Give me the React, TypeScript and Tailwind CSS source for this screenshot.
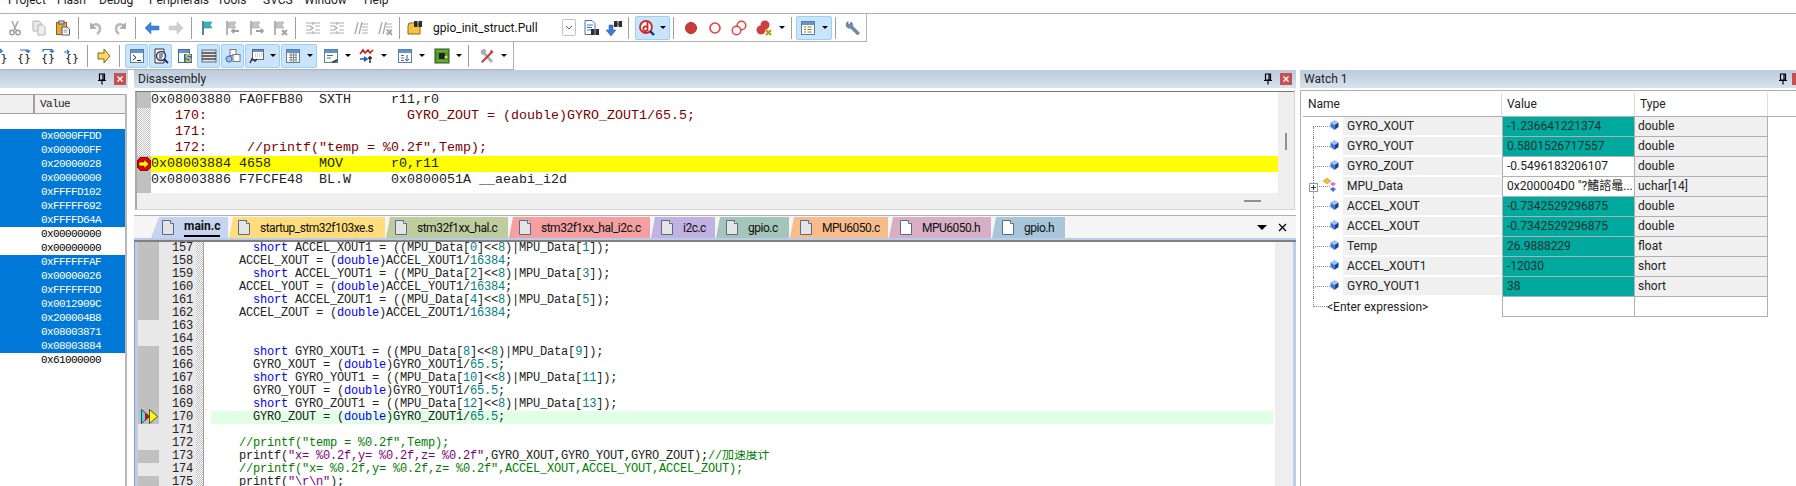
import type { ReactNode } from "react";

const sans = "font-['Roboto','Noto_Sans_CJK_SC',sans-serif]";
const mono = "font-['Liberation_Mono','Noto_Sans_CJK_SC',monospace]";

function Ic({ children }: { children: ReactNode }) {
  return (
    <svg width="16" height="16" viewBox="0 0 16 16" className="shrink-0">
      {children}
    </svg>
  );
}

const Cut = () => (
  <Ic>
    <path d="M5 1l4 9M11 1L7 10" stroke="#a8a8a8" strokeWidth="1.6" fill="none" />
    <circle cx="5" cy="12.5" r="2.2" fill="none" stroke="#9a9a9a" strokeWidth="1.4" />
    <circle cx="11" cy="12.5" r="2.2" fill="none" stroke="#9a9a9a" strokeWidth="1.4" />
  </Ic>
);
const Copy = () => (
  <Ic>
    <path d="M2 1h6l2 2v8H2z" fill="#e8e8e8" stroke="#b4b4b4" />
    <path d="M7 5h5l2 2v8H7z" fill="#efefef" stroke="#b4b4b4" />
  </Ic>
);
const Paste = () => (
  <Ic>
    <rect x="1.5" y="2.5" width="10" height="12" fill="#e8a93c" stroke="#8a6420" />
    <rect x="4" y="1" width="5" height="3" fill="#d8d8d8" stroke="#555" />
    <path d="M7 7h5l2.500 2v6H7z" fill="#fff" stroke="#556" />
    <path d="M8.500 10h4M8.500 12h4" stroke="#8896b0" />
  </Ic>
);
const Undo = ({ flip }: { flip?: boolean }) => (
  <Ic>
    <g transform={flip ? "matrix(-1 0 0 1 16 0)" : undefined}>
      <path d="M4 6c3-3 8-2 8 3 0 2-1 3.500-3 5" fill="none" stroke="#b8b8b8" strokeWidth="2.4" />
      <path d="M2 2v7h7z" fill="#b0b0b0" />
    </g>
  </Ic>
);
const BlueArrow = ({ gray, right }: { gray?: boolean; right?: boolean }) => (
  <Ic>
    <path
      d={right ? "M1 6h8V2l6 6-6 6v-4H1z" : "M15 6H7V2L1 8l6 6v-4h8z"}
      fill={gray ? "#cfcfcf" : "#3d84d8"}
      stroke={gray ? "#bdbdbd" : "#2d6cb8"}
      strokeWidth="0.5"
    />
  </Ic>
);
const Flag = ({ gray, mark }: { gray?: boolean; mark?: string }) => (
  <Ic>
    <path d="M3 1v14" stroke={gray ? "#a0a0a0" : "#2a6a78"} strokeWidth="1.6" />
    <path d="M4 2h8l-2 3 2 3H4z" fill={gray ? "#c4c4c4" : "#3fb0c4"} stroke={gray ? "#a8a8a8" : "#2a8a9c"} strokeWidth="0.6" />
    {mark && <path d={mark} stroke="#a0a0a0" strokeWidth="1.8" fill="none" />}
  </Ic>
);
const Lines = ({ slash, x }: { slash?: boolean; x?: boolean }) => (
  <Ic>
    {slash ? (
      <path d="M5 2L2 14M9 2L6 14" stroke="#a8a8a8" strokeWidth="1.3" />
    ) : (
      <path d="M8 2v3M8 11v3M5 6l3 2-3 2" stroke="#a8a8a8" strokeWidth="1.2" fill="none" />
    )}
    <path
      d={slash ? "M9 4h6M9 7h6M9 10h6M9 13h6" : "M1 3h14M1 6h5M10 6h5M1 10h5M10 10h5M1 13h14"}
      stroke="#b0b0b0"
    />
    {x && <path d="M10 10l5 5M15 10l-5 5" stroke="#9a9a9a" strokeWidth="1.4" />}
  </Ic>
);
const Binoc = ({ x = 7, y = 1 }: { x?: number; y?: number }) => (
  <g transform={`translate(${x} ${y})`}>
    <rect x="0" y="1" width="3.500" height="6" fill="#2c2c34" />
    <rect x="4.500" y="1" width="3.500" height="6" fill="#2c2c34" />
    <rect x="3" y="3" width="2" height="2" fill="#666" />
  </g>
);
const FolderFind = () => (
  <Ic>
    <path d="M1 6l1-3h5l1 1h5v10H1z" fill="#f4c542" stroke="#8a6a1c" />
    <Binoc x={7} y={0} />
  </Ic>
);
const DocFind = () => (
  <Ic>
    <path d="M2 .5h7l3 3v11H2z" fill="#fff" stroke="#4a6ea8" />
    <path d="M4 5h6M4 7.500h5M4 10h4" stroke="#3a78cc" />
    <Binoc x={8} y={8} />
  </Ic>
);
const DownFind = () => (
  <Ic>
    <path d="M3 5h4v5h3l-5 6-5-6h3z" fill="#3d7ad0" stroke="#2b5aa0" strokeWidth="0.5" />
    <Binoc x={8} y={0} />
  </Ic>
);
const DebugIcon = () => (
  <Ic>
    <circle cx="7" cy="7" r="6" fill="#fff" stroke="#d02828" strokeWidth="1.8" />
    <path d="M8.500 2v9M8.500 7.500a2.300 2.300 0 1 0 0 2.500" fill="none" stroke="#d02828" strokeWidth="1.8" />
    <path d="M11 11l4 4" stroke="#1a2a8a" strokeWidth="2.4" />
  </Ic>
);
const RedDot = () => (
  <Ic>
    <circle cx="8" cy="8" r="5.500" fill="#cc3a3a" stroke="#b02c2c" />
  </Ic>
);
const RedRing = () => (
  <Ic>
    <circle cx="8" cy="8" r="5" fill="#fff6f6" stroke="#d44" strokeWidth="1.6" />
  </Ic>
);
const RedRings = () => (
  <Ic>
    <circle cx="10.500" cy="5.500" r="4.300" fill="#fff6f6" stroke="#d44" strokeWidth="1.4" />
    <circle cx="5.500" cy="10.500" r="4.300" fill="#fff6f6" stroke="#d44" strokeWidth="1.4" />
  </Ic>
);
const RedKill = () => (
  <Ic>
    <circle cx="9" cy="5" r="4.500" fill="#cc4040" />
    <circle cx="5" cy="10" r="4.500" fill="#cc4040" />
    <path d="M10 10l5 5M15 10l-5 5" stroke="#b09a10" strokeWidth="2" />
  </Ic>
);
const Win = ({ children }: { children?: ReactNode }) => (
  <Ic>
    <rect x="1.500" y="1.500" width="13" height="13" fill="#fff" stroke="#5a7ea8" />
    <rect x="2" y="2" width="12" height="3" fill="#5e94d0" />
    {children}
  </Ic>
);
const Wrench = () => (
  <Ic>
    <path d="M3 1.500a4 4 0 0 0-1.500 5c1 1.500 2.500 2 4 1.500l7 7 2-2-7-7c.5-1.500 0-3-1.500-4L4.500 5 3 4z" fill="#6e8cb4" stroke="#4a5a74" strokeWidth="0.6" />
  </Ic>
);
const Tools = () => (
  <Ic>
    <path d="M2 3l3-2 2 2-1 1.500 7.500 8.500-1.500 1.500L4.500 6 3 6.500z" fill="#a8b4c0" stroke="#667" strokeWidth="0.4" />
    <path d="M12 1.500l2.500 2.500-2 2L5 13.500 3.500 15 2 13.500l1.500-1.500 7.500-7.500z" fill="#c84030" />
  </Ic>
);
const Brace = ({ text, arrow }: { text: string; arrow: string }) => (
  <Ic>
    <text x="8" y="14" textAnchor="middle" fontSize="11" fontFamily="DejaVu Sans" fill="#111">
      {text}
    </text>
    <path d={arrow} fill="none" stroke="#2a70d0" strokeWidth="1.2" />
  </Ic>
);

function Arrow() {
  return <span className="w-0 h-0 border-x-[3px] border-t-[3px] border-x-transparent border-t-black" />;
}

function Btn({ children, className = "w-[24px]" }: { children: ReactNode; className?: string }) {
  return <div className={`h-full flex items-center justify-center shrink-0 ${className}`}>{children}</div>;
}

function Drop({ children, className = "w-[24px]", arrow = "w-[9px]" }: { children: ReactNode; className?: string; arrow?: string }) {
  return (
    <>
      <Btn className={className}>{children}</Btn>
      <Btn className={arrow}>
        <Arrow />
      </Btn>
    </>
  );
}

function Sel({ children, className, drop }: { children: ReactNode; className: string; drop?: boolean }) {
  return (
    <div className={`h-[24px] flex items-center shrink-0 rounded-[2px] border border-[#9bd0fa] bg-[#c9e4fb] ${className}`}>
      <div className="w-[21px] flex justify-center shrink-0">{children}</div>
      {drop && (
        <div className="flex-1 flex justify-center">
          <Arrow />
        </div>
      )}
    </div>
  );
}

function Sep({ className }: { className: string }) {
  return <div className={`w-px h-[22px] bg-[#a0a0a0] shrink-0 ${className}`} />;
}

function MenuBar() {
  const items = [
    ["Project", "w-[49px]"],
    ["Flash", "w-[42px]"],
    ["Debug", "w-[50px]"],
    ["Peripherals", "w-[68px]"],
    ["Tools", "w-[46px]"],
    ["SVCS", "w-[41px]"],
    ["Window", "w-[60px]"],
    ["Help", "w-[40px]"],
  ];
  return (
    <div className={`h-[14px] border-b border-[#b0b0b0] overflow-hidden flex pl-[8px] text-[12px] leading-[14px] text-[#222] ${sans}`}>
      {items.map(([label, w]) => (
        <span key={label} className={`-mt-[7px] shrink-0 ${w}`}>
          {label}
        </span>
      ))}
    </div>
  );
}

function ToolbarOne() {
  return (
    <div className="w-[867px] h-[28px] border-b border-r border-[#b0b0b0] flex items-center pl-[3px]">
      <Btn><Cut /></Btn>
      <Btn><Copy /></Btn>
      <Btn><Paste /></Btn>
      <Sep className="ml-[3px] mr-[5px]" />
      <Btn><Undo /></Btn>
      <Btn><Undo flip /></Btn>
      <Sep className="ml-[3px] mr-[4px]" />
      <Btn><BlueArrow /></Btn>
      <Btn><BlueArrow gray right /></Btn>
      <Sep className="ml-[3px] mr-[4px]" />
      <Btn><Flag /></Btn>
      <Btn><Flag gray mark="M15 11H8M10 9l-2 2 2 2" /></Btn>
      <Btn><Flag gray mark="M8 11h7M13 9l2 2-2 2" /></Btn>
      <Btn><Flag gray mark="M10 10l5 5M15 10l-5 5" /></Btn>
      <Sep className="ml-[3px] mr-[5px]" />
      <Btn><Lines /></Btn>
      <Btn><Lines /></Btn>
      <Btn><Lines slash /></Btn>
      <Btn><Lines slash x /></Btn>
      <Sep className="ml-[2px] mr-[3px]" />
      <Btn><FolderFind /></Btn>
      <div className={`w-[135px] pl-[6px] shrink-0 text-[12px] text-[#111] ${sans}`}>gpio_init_struct.Pull</div>
      <div className="w-[14px] h-[17px] border border-[#c4c4c4] rounded-[2px] flex items-center justify-center shrink-0">
        <svg width="8" height="5" viewBox="0 0 8 5">
          <path d="M1 1l3 3 3-3" fill="none" stroke="#555" />
        </svg>
      </div>
      <Btn className="w-[23px] ml-[3px]"><DocFind /></Btn>
      <Btn><DownFind /></Btn>
      <Sep className="ml-[2px] mr-[6px]" />
      <Sel className="w-[35px]" drop><DebugIcon /></Sel>
      <Sep className="ml-[3px] mr-[5px]" />
      <Btn><RedDot /></Btn>
      <Btn><RedRing /></Btn>
      <Btn><RedRings /></Btn>
      <Drop className="w-[26px]"><RedKill /></Drop>
      <Sep className="ml-[5px] mr-[4px]" />
      <Sel className="w-[36px]" drop>
        <Win><path d="M4 7h2M4 9.500h2M4 12h2M7.500 7h4M7.500 9.500h4M7.500 12h4" stroke="#8a7a10" /></Win>
      </Sel>
      <Sep className="ml-[3px] mr-[5px]" />
      <Btn><Wrench /></Btn>
    </div>
  );
}

function ToolbarTwo() {
  return (
    <div className="w-[514px] h-[28px] border-b border-r border-[#b0b0b0] flex items-center">
      <div className="w-[12px] h-full overflow-hidden flex items-center justify-end shrink-0">
        <Brace text="}" arrow="M1 3h5l-2-2M6 3L4 5" />
      </div>
      <Btn><Brace text="{}" arrow="M4 2h8v2M10 2.500l2 2 2-2" /></Btn>
      <Btn><Brace text="{}" arrow="M3 4V1.500h9V4M10 2.500l2 2 2-2" /></Btn>
      <Btn><Brace text="{}" arrow="M0 4h5M3 2l2 2-2 2" /></Btn>
      <Sep className="ml-[3px] mr-[4px]" />
      <Btn>
        <Ic><path d="M2 5h6V1l6 7-6 7v-4H2z" fill="#f8d860" stroke="#7a6a20" /></Ic>
      </Btn>
      <Sep className="ml-[3px] mr-[5px]" />
      <Sel className="w-[23px]">
        <Win><path d="M4 7l3 2.500L4 12M8 12.500h4" stroke="#222" fill="none" /></Win>
      </Sel>
      <Sel className="w-[23px] ml-px">
        <Ic>
          <path d="M2 1h9v14H2z" fill="#fff" stroke="#333" />
          <circle cx="8" cy="8" r="4.500" fill="#eef" stroke="#335" strokeWidth="1.4" />
          <path d="M6 6h4M6 8h4M6 10h3" stroke="#334" />
          <path d="M11 11l4 4" stroke="#1a2a8a" strokeWidth="2" />
        </Ic>
      </Sel>
      <Btn className="w-[25px]">
        <Ic>
          <rect x="1.500" y="1.500" width="11" height="13" fill="#fff" stroke="#4a6a94" />
          <rect x="2" y="2" width="10" height="3" fill="#5e94d0" />
          <rect x="7" y="6" width="8" height="9" fill="#2868c8" />
          <text x="11" y="14" textAnchor="middle" fontSize="10" fontWeight="700" fontFamily="Liberation Sans" fill="#f4d020">S</text>
        </Ic>
      </Btn>
      <Sel className="w-[23px]">
        <Ic>
          <rect x="1" y="2" width="14" height="12" fill="#dfe6f0" stroke="#667" />
          <path d="M1 5h14M1 8h14M1 11h14" stroke="#444" strokeWidth="1.4" />
        </Ic>
      </Sel>
      <Sel className="w-[23px] ml-px">
        <Ic>
          <rect x="5" y="1.500" width="6" height="6" fill="#fff" stroke="#778" />
          <rect x="8" y="6.500" width="7" height="7" fill="#fff" stroke="#778" />
          <circle cx="4" cy="11" r="3" fill="#9cc0e8" stroke="#3a68a8" />
        </Ic>
      </Sel>
      <Sel className="w-[35px] ml-px" drop>
        <Ic>
          <rect x="3.500" y="1.500" width="11" height="10" fill="#fff" stroke="#667" />
          <rect x="4" y="2" width="10" height="2" fill="#5e94d0" />
          <path d="M6 6h7M6 8h7" stroke="#aaa" strokeDasharray="1 1" />
          <path d="M1 15l2-4 3 2 2-2" stroke="#334" strokeWidth="1.6" fill="none" />
        </Ic>
      </Sel>
      <Sel className="w-[36px] ml-px" drop>
        <Win><path d="M4 7h8M4 9.500h8M4 12h8M6 5v9M8.500 5v9M11 5v9" stroke="#888" /></Win>
      </Sel>
      <Drop className="w-[24px] ml-[2px]">
        <Win><path d="M4 7.500h6M4 10h4" stroke="#667" /><path d="M8 14l6-3 1 2-4 2z" fill="#444" /></Win>
      </Drop>
      <Drop className="w-[24px] ml-[3px]">
        <Ic>
          <path d="M1 6l3-4 2 3 3-3 2 3 3-3" fill="none" stroke="#c82020" strokeWidth="1.6" />
          <path d="M1 11h7M5 9l3 2-3 2" fill="none" stroke="#2060c0" strokeWidth="1.6" />
          <path d="M11 8v7M9 10h4" stroke="#222" strokeWidth="1.4" />
        </Ic>
      </Drop>
      <Drop className="w-[24px] ml-[5px]">
        <Win><path d="M4 7.500h3M4 10h3M4 12.500h3" stroke="#667" /><path d="M10 7v6M8 11l2 2 2-2" stroke="#2060c0" fill="none" /></Win>
      </Drop>
      <Drop className="w-[24px] ml-[4px]">
        <Ic>
          <rect x="1" y="1" width="14" height="14" fill="#4a9a30" stroke="#2a5a1c" />
          <rect x="5" y="5" width="6" height="6" fill="#222" />
          <path d="M2.500 3h11M2.500 13h11" stroke="#d8d040" strokeDasharray="1 1" />
          <circle cx="12" cy="9" r="1.500" fill="#c8e860" />
        </Ic>
      </Drop>
      <Sep className="ml-[5px] mr-[6px]" />
      <Drop><Tools /></Drop>
    </div>
  );
}

function Title({ text, children }: { text: string; children: ReactNode }) {
  return (
    <div className={`h-[18px] shrink-0 flex items-center bg-linear-to-b from-[#bccbdb] to-[#d6e2ef] text-[12px] text-[#222] ${sans}`}>
      <span className="pl-[4px] flex-1">{text}</span>
      {children}
    </div>
  );
}

const Pin = () => (
  <svg width="10" height="12" viewBox="0 0 10 12" className="shrink-0">
    <path d="M2.500 1h5v6h-5zM6 1v6M1 7.500h8M5 8v3.500" fill="none" stroke="#000" strokeWidth="1.2" />
  </svg>
);
const Close = () => (
  <div className="w-[12px] h-[12px] bg-[#c75050] flex items-center justify-center shrink-0">
    <svg width="6" height="6" viewBox="0 0 6 6">
      <path d="M.5.5l5 5M5.500.5l-5 5" stroke="#fff" strokeWidth="1.4" />
    </svg>
  </div>
);

const registers: [string, boolean][] = [
  ["0x0000FFDD", true],
  ["0x000000FF", true],
  ["0x20000028", true],
  ["0x00000000", true],
  ["0xFFFFD102", true],
  ["0xFFFFF692", true],
  ["0xFFFFD64A", true],
  ["0x00000000", false],
  ["0x00000000", false],
  ["0xFFFFFFAF", true],
  ["0x00000026", true],
  ["0xFFFFFFDD", true],
  ["0x0012909C", true],
  ["0x200004B8", true],
  ["0x08003871", true],
  ["0x08003884", true],
  ["0x61000000", false],
];

function RegistersPanel() {
  return (
    <div className="w-[128px] shrink-0 flex flex-col">
      <Title text="">
        <div className="mr-[7px]"><Pin /></div>
        <div className="mr-[2px]"><Close /></div>
      </Title>
      <div className="flex-1 mt-[6px] mr-px border-r-2 border-[#b8b8b8]">
        <div className={`h-[20px] flex border-t border-b border-[#a0a0a0] bg-[#f0f0f0] text-[11px] tracking-[-0.6px] text-[#222] ${mono}`}>
          <div className="w-[35px] border-r-2 border-[#a0a0a0]" />
          <div className="pl-[5px] leading-[19px]">Value</div>
        </div>
        <div className={`mt-[15px] text-[11px] tracking-[-0.6px] leading-[14px] ${mono}`}>
          {registers.map(([value, changed], i) => (
            <div key={i} className={`h-[14px] pl-[41px] ${changed ? "bg-[#0078d7] text-white" : "bg-white text-black"}`}>
              {value}
            </div>
          ))}
        </div>
      </div>
    </div>
  );
}

const disasm: { text: string; kind: "code" | "src" | "cur" }[] = [
  { text: "0x08003880 FA0FFB80  SXTH     r11,r0", kind: "code" },
  { text: "   170:                         GYRO_ZOUT = (double)GYRO_ZOUT1/65.5;", kind: "src" },
  { text: "   171:", kind: "src" },
  { text: '   172:     //printf("temp = %0.2f",Temp);', kind: "src" },
  { text: "0x08003884 4658      MOV      r0,r11", kind: "cur" },
  { text: "0x08003886 F7FCFE48  BL.W     0x0800051A __aeabi_i2d", kind: "code" },
];

const dither = "bg-[repeating-conic-gradient(#c0c0c0_0_25%,#ffffff_0_50%)] bg-[length:2px_2px]";

function DisassemblyPanel() {
  return (
    <>
      <Title text="Disassembly">
        <div className="mr-[7px]"><Pin /></div>
        <div className="mr-[4px]"><Close /></div>
      </Title>
      <div className="mt-[3px] mx-px h-[119px] shrink-0 border-t border-l-2 border-r border-b border-t-[#777] border-l-[#a8a8a8] border-r-[#d4d4d4] border-b-[#d4d4d4] bg-[#efefef] flex flex-col">
        <div className="flex h-[101px]">
          <div className="flex-1 bg-white">
            {disasm.map((row, i) => (
              <div key={i} className={`h-[16px] flex ${mono} text-[13.33px] leading-[16px] whitespace-pre`}>
                <div className={`w-[14px] shrink-0 ${row.kind === "src" ? dither : "bg-[#c0c0c0]"}`}>
                  {row.kind === "cur" && (
                    <svg width="14" height="14" viewBox="0 0 14 14" className="mt-px">
                      <path d="M4 0h6l4 4v6l-4 4H4l-4-4V4z" fill="#e80000" stroke="#400" strokeWidth="0.8" />
                      <path d="M2 5h5V2.500L12 7l-5 4.500V9H2z" fill="#ffff00" stroke="#400" strokeWidth="0.6" />
                    </svg>
                  )}
                </div>
                <div
                  className={`flex-1 ${row.kind === "cur" ? "bg-[#ffff00]" : ""} ${
                    row.kind === "src" ? "text-[#800000]" : "text-[#222]"
                  }`}
                >
                  {row.text}
                </div>
              </div>
            ))}
            <div className="h-[5px] w-[14px] bg-[#c0c0c0]" />
          </div>
          <div className="w-[16px] shrink-0 flex justify-center">
            <div className="w-[2px] h-[17px] mt-[41px] bg-[#909090]" />
          </div>
        </div>
        <div className="h-[2px] w-[17px] mt-[7px] ml-[1107px] bg-[#909090]" />
      </div>
    </>
  );
}

const DocIcon = ({ shaded }: { shaded?: boolean }) => (
  <svg width="12" height="15" viewBox="0 0 12 15" className="shrink-0 mr-[10px]">
    <path d="M.5.5h8l3 3v11H.5z" fill={shaded ? "#e4e4e4" : "#fff"} stroke="#5a6a88" />
    <path d="M8.500.5v3h3" fill="#fff" stroke="#5a6a88" />
  </svg>
);

const tabs = [
  { name: "main.c", cls: "w-[77px] bg-[#c6d4f0] pl-[11px] [clip-path:polygon(8px_0,100%_0,100%_100%,0_100%)]", shaded: true, active: true },
  { name: "startup_stm32f103xe.s", cls: "w-[156px] bg-[#ffdc7c] pl-[9px] [clip-path:polygon(4px_0,100%_0,100%_100%,0_100%)]", shaded: true },
  { name: "stm32f1xx_hal.c", cls: "w-[122px] bg-[#bfcd9e] pl-[9px] [clip-path:polygon(4px_0,100%_0,100%_100%,0_100%)]", shaded: true },
  { name: "stm32f1xx_hal_i2c.c", cls: "w-[141px] bg-[#f4a0a0] pl-[10px] [clip-path:polygon(4px_0,100%_0,100%_100%,0_100%)]", shaded: true },
  { name: "i2c.c", cls: "w-[64px] bg-[#c2b2e2] pl-[10px] [clip-path:polygon(4px_0,100%_0,100%_100%,0_100%)]", shaded: true },
  { name: "gpio.c", cls: "w-[73px] bg-[#a4c6ba] pl-[10px] [clip-path:polygon(4px_0,100%_0,100%_100%,0_100%)]", shaded: true },
  { name: "MPU6050.c", cls: "w-[98px] bg-[#f8bc8a] pl-[10px] [clip-path:polygon(4px_0,100%_0,100%_100%,0_100%)]", shaded: true },
  { name: "MPU6050.h", cls: "w-[102px] bg-[#d8aec6] pl-[11px] [clip-path:polygon(4px_0,100%_0,100%_100%,0_100%)]" },
  { name: "gpio.h", cls: "w-[73px] bg-[#a8c6da] pl-[10px] [clip-path:polygon(4px_0,100%_0,100%_100%,0_100%)]" },
];

function TabStrip() {
  return (
    <div className={`h-[23px] shrink-0 flex items-end pl-[17px] gap-px bg-[#f5f5f5] border-t border-[#b0b0b0] text-[12px] text-[#111] ${sans}`}>
      {tabs.map((t) => (
        <div key={t.name} className={`h-[21px] shrink-0 flex items-center ${t.cls}`}>
          <DocIcon shaded={t.shaded} />
          <span className={t.active ? "font-bold border-b-2 border-black h-[19px] leading-[17px]" : "tracking-[-0.5px]"}>{t.name}</span>
        </div>
      ))}
      <div className="flex-1 self-stretch flex items-center justify-end pr-[9px] gap-[11px]">
        <span className="w-0 h-0 border-x-[5px] border-t-[5px] border-x-transparent border-t-black" />
        <svg width="9" height="9" viewBox="0 0 9 9">
          <path d="M1 1l7 7M8 1L1 8" stroke="#000" strokeWidth="1.3" />
        </svg>
      </div>
    </div>
  );
}

const source: [number, string][] = [
  [157, "      short ACCEL_XOUT1 = ((MPU_Data[0]<<8)|MPU_Data[1]);"],
  [158, "    ACCEL_XOUT = (double)ACCEL_XOUT1/16384;"],
  [159, "      short ACCEL_YOUT1 = ((MPU_Data[2]<<8)|MPU_Data[3]);"],
  [160, "    ACCEL_YOUT = (double)ACCEL_YOUT1/16384;"],
  [161, "      short ACCEL_ZOUT1 = ((MPU_Data[4]<<8)|MPU_Data[5]);"],
  [162, "    ACCEL_ZOUT = (double)ACCEL_ZOUT1/16384;"],
  [163, ""],
  [164, ""],
  [165, "      short GYRO_XOUT1 = ((MPU_Data[8]<<8)|MPU_Data[9]);"],
  [166, "      GYRO_XOUT = (double)GYRO_XOUT1/65.5;"],
  [167, "      short GYRO_YOUT1 = ((MPU_Data[10]<<8)|MPU_Data[11]);"],
  [168, "      GYRO_YOUT = (double)GYRO_YOUT1/65.5;"],
  [169, "      short GYRO_ZOUT1 = ((MPU_Data[12]<<8)|MPU_Data[13]);"],
  [170, "      GYRO_ZOUT = (double)GYRO_ZOUT1/65.5;"],
  [171, ""],
  [172, '    //printf("temp = %0.2f",Temp);'],
  [173, '    printf("x= %0.2f,y= %0.2f,z= %0.2f",GYRO_XOUT,GYRO_YOUT,GYRO_ZOUT);//加速度计'],
  [174, '    //printf("x= %0.2f,y= %0.2f,z= %0.2f",ACCEL_XOUT,ACCEL_YOUT,ACCEL_ZOUT);'],
  [175, '    printf("\\r\\n");'],
];

const noCode = [163, 164, 171, 172, 174];

// small highlighter, same colours as the editor
function highlight(line: string) {
  const re = /(\/\/.*$)|("[^"]*")|\b(short|double)\b|(\b\d+(?:\.\d+)?\b)(?![\w])/g;
  const out: ReactNode[] = [];
  let last = 0;
  let m: RegExpExecArray | null;
  let k = 0;
  while ((m = re.exec(line))) {
    out.push(line.slice(last, m.index));
    const cls = m[1] ? "text-[#008000]" : m[2] ? "text-[#800080]" : m[3] ? "text-[#0000ff]" : "text-[#008080]";
    out.push(
      <span key={k++} className={cls}>
        {m[0]}
      </span>
    );
    last = m.index + m[0].length;
  }
  out.push(line.slice(last));
  return out;
}

function Editor() {
  return (
    <div className="flex-1 mt-[5px] min-h-0 flex flex-col overflow-hidden">
      <TabStrip />
      <div className="h-[2px] shrink-0 bg-[#bccbea]" />
      <div className="h-[2px] shrink-0 bg-[#808080]" />
      <div className="flex-1 flex min-h-0 overflow-hidden">
        <div className="w-[4px] shrink-0 bg-[#bccbea] border-l border-[#909cb8]" />
        <div className={`flex-1 min-w-0 text-[12px] tracking-[-0.2px] leading-[13px] whitespace-pre text-[#222] ${mono}`}>
          {source.map(([n, line]) => (
            <div key={n} className="h-[13px] flex">
              <div className={`w-[21px] shrink-0 pl-[3px] ${noCode.includes(n) ? "bg-[#e8e8e8]" : "bg-[#c0c0c0]"}`}>
                {n === 170 && (
                  <svg width="17" height="15" viewBox="0 0 17 15" className="-mt-[2px] overflow-visible">
                    <path d="M.5.5l8 7-8 7z" fill="#40e0f0" stroke="#111" strokeWidth="0.7" />
                    <path d="M4 3.500l4.500 4L4 11.500z" fill="#e80000" />
                    <path d="M8.500.5l8 7-8 7z" fill="#ffff00" stroke="#111" strokeWidth="0.7" />
                  </svg>
                )}
              </div>
              <div className="w-[37px] shrink-0 bg-[#e8e8e8] text-right pr-[3px]">{n}</div>
              <div className={`w-[7px] shrink-0 ${dither}`} />
              <div className="w-px shrink-0 bg-[#a0a0a0]" />
              <div className="w-[7px] shrink-0" />
              <div className={`flex-1 mr-[2px] overflow-hidden ${n === 170 ? "bg-[#e0ffe4]" : ""}`}>{highlight(line)}</div>
            </div>
          ))}
        </div>
        <div className="w-[18px] shrink-0 bg-[#eeeeee]" />
        <div className="w-[3px] shrink-0 bg-[#bccbea]" />
      </div>
    </div>
  );
}

const watches: { name: string; value: string; type: string; hit?: boolean; array?: boolean }[] = [
  { name: "GYRO_XOUT", value: "-1.236641221374", type: "double", hit: true },
  { name: "GYRO_YOUT", value: "0.5801526717557", type: "double", hit: true },
  { name: "GYRO_ZOUT", value: "-0.5496183206107", type: "double" },
  { name: "MPU_Data", value: '0x200004D0 "?鰭諮鼂...', type: "uchar[14]", array: true },
  { name: "ACCEL_XOUT", value: "-0.7342529296875", type: "double", hit: true },
  { name: "ACCEL_XOUT", value: "-0.7342529296875", type: "double", hit: true },
  { name: "Temp", value: "26.9888229", type: "float", hit: true },
  { name: "ACCEL_XOUT1", value: "-12030", type: "short", hit: true },
  { name: "GYRO_YOUT1", value: "38", type: "short", hit: true },
];

const VarIcon = () => (
  <svg width="9" height="10" viewBox="0 0 9 10" className="-mt-[4px] shrink-0">
    <path d="M4.500 0L8.500 2.500 4.500 5 .5 2.500z" fill="#9cc4f4" />
    <path d="M.5 2.500L4.500 5v5L.5 7z" fill="#3a78d8" />
    <path d="M8.500 2.500L4.500 5v5l4-3z" fill="#1c3f94" />
  </svg>
);
const ArrayIcon = () => (
  <svg width="15" height="15" viewBox="0 0 15 15" className="-ml-[7px] -mt-[3px] shrink-0">
    <path d="M4 0l4 3-4 3-4-3z" fill="#f0c030" stroke="#a08010" strokeWidth="0.4" />
    <path d="M10 4l3 2-3 2-3-2z" fill="#e060d8" />
    <path d="M10 9l3 2-3 3-3-3z" fill="#3a78d8" />
  </svg>
);

function TreeLines({ first, last, wide }: { first?: boolean; last?: boolean; wide?: boolean }) {
  return (
    <div className={`ml-[10px] h-full flex flex-col shrink-0 ${wide ? "w-[14px]" : "w-[17px]"}`}>
      <div className={`h-[10px] border-b border-dotted border-[#888] ${first ? "" : "border-l"}`} />
      <div className={`flex-1 border-dotted border-[#888] ${last ? "" : "border-l"}`} />
    </div>
  );
}

function WatchPanel() {
  return (
    <div className="flex-1 min-w-0 flex flex-col">
      <Title text="Watch 1">
        <div className="mr-[4px]"><Pin /></div>
        <div className="w-[4px] h-[12px] bg-[#c75050]" />
      </Title>
      <div className={`mt-[2px] flex-1 border-t border-l border-[#b0b0b0] pl-[2px] pt-[2px] text-[12px] text-[#222] ${sans}`}>
        <div className="h-[24px] flex border-b border-[#b0b0b0] leading-[22px] bg-white">
          <div className="w-[199px] pl-[5px] border-r border-[#dddddd] shrink-0">Name</div>
          <div className="w-[133px] pl-[5px] border-r border-[#dddddd] shrink-0">Value</div>
          <div className="w-[133px] pl-[5px] border-r border-[#dddddd] shrink-0">Type</div>
        </div>
        {watches.map((w, i) => (
          <div key={i} className="h-[20px] flex leading-[19px]">
            <div className="relative w-[40px] shrink-0 flex items-center">
              <TreeLines first={i === 0} />
              {w.array ? <ArrayIcon /> : <VarIcon />}
              {w.array && (
                <div className="absolute left-[6px] top-[6px] w-[9px] h-[9px] border border-[#999] bg-white flex items-center justify-center">
                  <svg width="7" height="7" viewBox="0 0 7 7">
                    <path d="M3.500 1v5M1 3.500h5" stroke="#2a3a8a" />
                  </svg>
                </div>
              )}
            </div>
            <div className="w-[159px] pl-[4px] shrink-0 bg-[#f0f0f0] border-b-2 border-white">{w.name}</div>
            <div
              className={`w-[133px] pl-[4px] shrink-0 border-l border-r border-b border-[#b0b0b0] overflow-hidden whitespace-nowrap ${
                w.hit ? "bg-[#00a99d] text-[#10322f]" : "bg-white"
              }`}
            >
              {w.value}
            </div>
            <div className="w-[133px] pl-[3px] shrink-0 bg-[#f0f0f0] border-r border-b border-[#b0b0b0]">{w.type}</div>
          </div>
        ))}
        <div className="h-[20px] flex leading-[19px]">
          <div className="w-[199px] shrink-0 flex items-center">
            <TreeLines last wide />
            <span>&lt;Enter expression&gt;</span>
          </div>
          <div className="w-[133px] shrink-0 border-l border-r border-b border-[#b0b0b0]" />
          <div className="w-[133px] shrink-0 border-r border-b border-[#b0b0b0]" />
        </div>
      </div>
    </div>
  );
}

export default function App() {
  return (
    <div className="w-[1796px] h-[486px] overflow-hidden bg-white flex flex-col">
      <MenuBar />
      <ToolbarOne />
      <ToolbarTwo />
      <div className="flex-1 min-h-0 flex">
        <RegistersPanel />
        <div className="w-[1162px] ml-[6px] shrink-0 flex flex-col min-h-0">
          <DisassemblyPanel />
          <Editor />
        </div>
        <div className="w-[4px] shrink-0" />
        <WatchPanel />
      </div>
    </div>
  );
}
